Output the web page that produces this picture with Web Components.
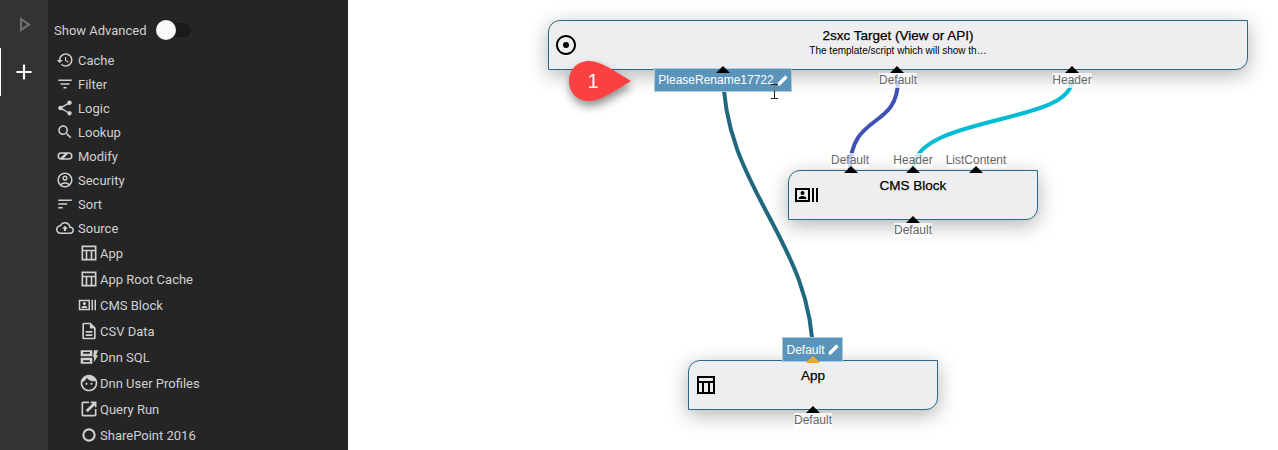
<!DOCTYPE html>
<html>
<head>
<meta charset="utf-8">
<title>Query designer</title>
<style>
  html, body { margin: 0; height: 450px; overflow: hidden; background: #fff; }
  body { display: flex; font-family: "Liberation Sans", Arial, sans-serif; }
</style>
</head>
<body>
<vd-rail></vd-rail>
<vd-palette>
  <vd-group icon="history">Cache</vd-group>
  <vd-group icon="filter">Filter</vd-group>
  <vd-group icon="share">Logic</vd-group>
  <vd-group icon="search">Lookup</vd-group>
  <vd-group icon="modify">Modify</vd-group>
  <vd-group icon="account">Security</vd-group>
  <vd-group icon="sort">Sort</vd-group>
  <vd-group icon="cloud">Source</vd-group>
  <vd-source icon="table">App</vd-source>
  <vd-source icon="table">App Root Cache</vd-source>
  <vd-source icon="cms" wide>CMS Block</vd-source>
  <vd-source icon="file">CSV Data</vd-source>
  <vd-source icon="sql">Dnn SQL</vd-source>
  <vd-source icon="face">Dnn User Profiles</vd-source>
  <vd-source icon="launch">Query Run</vd-source>
  <vd-source icon="circle">SharePoint 2016</vd-source>
</vd-palette>
<vd-canvas>
  <vd-node style="left:200px;top:20px;width:700px" icon="radio" name="2sxc Target (View or API)" note="The template/script which will show th…"></vd-node>
  <vd-node style="left:440px;top:170px;width:250px" icon="cms" name="CMS Block"></vd-node>
  <vd-node style="left:340px;top:360px;width:250px" icon="table" name="App"></vd-node>

  <svg class="wires" width="930" height="450">
    <path d="M375 70C375 190 465 240 465 358" stroke="#20687f"/>
    <path d="M550 80C550 130 502 112 502 170" stroke="#3f51b5"/>
    <path d="M724 80C724 125 565 115 565 170" stroke="#00bcd4"/>
  </svg>

  <vd-label style="left:550px;top:73px">Default</vd-label>
  <vd-label style="left:724px;top:73px">Header</vd-label>
  <vd-label style="left:502px;top:153px">Default</vd-label>
  <vd-label style="left:565px;top:153px">Header</vd-label>
  <vd-label style="left:628px;top:153px">ListContent</vd-label>
  <vd-label style="left:565px;top:223px">Default</vd-label>
  <vd-label style="left:465px;top:413px">Default</vd-label>

  <vd-tag style="left:306px;top:68px;width:138px">PleaseRename17722</vd-tag>
  <vd-tag style="left:434px;top:337px;width:61px;height:25px" warn>Default</vd-tag>

  <vd-port style="left:375px;top:66px"></vd-port>
  <vd-port style="left:549px;top:66px"></vd-port>
  <vd-port style="left:724px;top:66px"></vd-port>
  <vd-port style="left:503px;top:166px"></vd-port>
  <vd-port style="left:565px;top:166px"></vd-port>
  <vd-port style="left:628px;top:166px"></vd-port>
  <vd-port style="left:565px;top:216px"></vd-port>
  <vd-port style="left:465px;top:406px"></vd-port>

  <vd-callout style="left:221px;top:61px">1</vd-callout>
  <svg class="cursor" width="9" height="15" viewBox="0 0 9 15"><path d="M1 .5h7M1 14.500h7M4.500 .5v14" fill="none" stroke="#222"/><path d="M4.500 1v6" stroke="#a8643a"/></svg>
</vd-canvas>

<script>
const ICONS = {
  play: '<path d="M8 5v15l11-7.500z M10 9l5 3.500-5 3.500z" fill-rule="evenodd"/>',
  history: '<path d="M13 3c-4.970 0-9 4.030-9 9H1l3.890 3.890.07.14L9 12H6c0-3.870 3.130-7 7-7s7 3.130 7 7-3.130 7-7 7c-1.930 0-3.680-.79-4.940-2.060l-1.420 1.420C8.270 19.990 10.510 21 13 21c4.970 0 9-4.030 9-9s-4.030-9-9-9zm-1 5v5l4.280 2.540.72-1.210-3.500-2.080V8H12z"/>',
  filter: '<path d="M10 18h4v-2h-4v2zM3 6v2h18V6H3zm3 7h12v-2H6v2z"/>',
  share: '<path d="M18 16.080c-.76 0-1.440.3-1.960.77L8.910 12.700c.05-.23.09-.46.09-.7s-.04-.47-.09-.7l7.050-4.110c.54.5 1.250.81 2.040.81 1.660 0 3-1.340 3-3s-1.340-3-3-3-3 1.340-3 3c0 .24.04.47.09.7L8.040 9.810C7.500 9.310 6.790 9 6 9c-1.660 0-3 1.340-3 3s1.340 3 3 3c.79 0 1.500-.31 2.040-.81l7.120 4.160c-.05.21-.08.43-.08.65 0 1.610 1.310 2.920 2.920 2.920 1.610 0 2.920-1.310 2.920-2.920s-1.310-2.920-2.920-2.920z"/>',
  search: '<path d="M15.500 14h-.79l-.28-.27C15.410 12.590 16 11.110 16 9.500 16 5.910 13.090 3 9.500 3S3 5.910 3 9.500 5.910 16 9.500 16c1.610 0 3.090-.59 4.230-1.570l.27.28v.79l5 4.990L20.490 19l-4.990-5zm-6 0C7.010 14 5 11.990 5 9.500S7.010 5 9.500 5 14 7.010 14 9.500 11.990 14 9.500 14z"/>',
  modify: '<path d="M7 7h10a5 5 0 0 1 0 10H7A5 5 0 0 1 7 7zm0 2a3 3 0 0 0-1.200 5.750L11.500 9zm3.300 6H17a3 3 0 0 0 0-6h-1z" fill-rule="evenodd"/>',
  account: '<path d="M12 2C6.480 2 2 6.480 2 12s4.480 10 10 10 10-4.480 10-10S17.520 2 12 2zM7.350 18.500C8.660 17.560 10.260 17 12 17s3.340.56 4.650 1.500c-1.310.94-2.910 1.500-4.650 1.500s-3.340-.56-4.650-1.500zm10.790-1.380C16.450 15.800 14.320 15 12 15s-4.450.8-6.140 2.120C4.700 15.730 4 13.950 4 12c0-4.420 3.580-8 8-8s8 3.580 8 8c0 1.950-.7 3.730-1.860 5.120z"/><path d="M12 6c-1.930 0-3.500 1.570-3.500 3.500S10.070 13 12 13s3.500-1.570 3.500-3.500S13.930 6 12 6zm0 5c-.83 0-1.500-.67-1.500-1.500S11.170 8 12 8s1.500.67 1.500 1.500S12.830 11 12 11z"/>',
  sort: '<path d="M3 18h6v-2H3v2zM3 6v2h18V6H3zm0 7h12v-2H3v2z"/>',
  cloud: '<path d="M19.350 10.040C18.670 6.590 15.640 4 12 4 9.110 4 6.600 5.640 5.350 8.040 2.340 8.360 0 10.910 0 14c0 3.310 2.690 6 6 6h13c2.760 0 5-2.240 5-5 0-2.640-2.050-4.780-4.650-4.960zM19 18H6c-2.210 0-4-1.790-4-4 0-2.050 1.530-3.760 3.560-3.970l1.070-.11.5-.95C8.080 7.140 9.940 6 12 6c2.620 0 4.880 1.860 5.390 4.430l.3 1.500 1.530.11c1.560.1 2.780 1.410 2.780 2.960 0 1.650-1.350 3-3 3zM8 13h2.550v3h2.900v-3H16l-4-4z"/>',
  table: '<path d="M3 3h18v18H3zm2 2v3h14V5zm0 5v9h3v-9zm5 0v9h4v-9zm6 0v9h3v-9z" fill-rule="evenodd"/>',
  cms: '<path d="M1 5h15v14H1zm2 2v10h11V7z" fill-rule="evenodd"/><circle cx="8.500" cy="10" r="2"/><path d="M4.500 16c0-2 2-3 4-3s4 1 4 3zM18 5h2v14h-2zM22 5h2v14h-2z"/>',
  file: '<path d="M8 16h8v2H8zm0-4h8v2H8zm6-10H6c-1.100 0-2 .9-2 2v16c0 1.100.89 2 1.990 2H18c1.100 0 2-.9 2-2V8l-6-6zm4 18H6V4h7v5h5v11z"/>',
  sql: '<path d="M2 4h14v7H2zm3 2v2h8V6zM2 13h14v7H2zm3 3v2h8v-2zM18 4h5l-2.500 6H23l-5 8v-6h-1z" fill-rule="evenodd"/>',
  face: '<path d="M9 11.750c-.69 0-1.250.56-1.250 1.250s.56 1.250 1.250 1.250 1.250-.56 1.250-1.250-.56-1.250-1.250-1.250zm6 0c-.69 0-1.250.56-1.250 1.250s.56 1.250 1.250 1.250 1.250-.56 1.250-1.250-.56-1.250-1.250-1.250zM12 2C6.480 2 2 6.480 2 12s4.480 10 10 10 10-4.480 10-10S17.520 2 12 2zm0 18c-4.410 0-8-3.590-8-8 0-.29.02-.58.05-.86 2.360-1.050 4.230-2.980 5.210-5.370C11.070 8.330 14.050 10 17.420 10c.78 0 1.530-.09 2.250-.26.21.71.33 1.470.33 2.260 0 4.410-3.590 8-8 8z"/>',
  launch: '<path d="M19 19H5V5h7V3H5c-1.110 0-2 .9-2 2v14c0 1.100.89 2 2 2h14c1.100 0 2-.9 2-2v-7h-2v7z"/><path d="M14 3v2h2.600L8 13.600 10.400 16 19 7.400V10h2V3z"/>',
  circle: '<path d="M12 4a8 8 0 1 0 0 16 8 8 0 0 0 0-16zm0 2.500a5.500 5.500 0 1 1 0 11 5.500 5.500 0 0 1 0-11z" fill-rule="evenodd"/>',
  radio: '<circle cx="12" cy="12" r="3"/><path d="M12 2C6.480 2 2 6.480 2 12s4.480 10 10 10 10-4.480 10-10S17.520 2 12 2zm0 18c-4.420 0-8-3.580-8-8s3.580-8 8-8 8 3.580 8 8-3.580 8-8 8z"/>',
  edit: '<path d="M3 21v-4.500L16.200 3.300c.5-.5 1.300-.5 1.800 0l2.700 2.700c.5.5.5 1.300 0 1.800L7.500 21z"/>',
};

function svg(name, size) {
  return `<svg width="${size}" height="${size}" viewBox="0 0 24 24" fill="currentColor">${ICONS[name]}</svg>`;
}

// all elements just render one string into an open shadow root
class Base extends HTMLElement {
  connectedCallback() {
    if (this.shadowRoot) return;
    this.attachShadow({ mode: 'open' }).innerHTML = this.markup();
  }
}

class VdRail extends Base {
  markup() {
    return `<style>
      :host { display: flex; flex-direction: column; flex: none; width: 48px; height: 450px; background: #333; }
      div { height: 48px; display: flex; align-items: center; justify-content: center; }
      .play { color: #6e6e6e; }
      .add { color: #fff; border-left: 1px solid #fff; margin-right: 1px; }
    </style>
    <div class="play">${svg('play', 24)}</div>
    <div class="add"><svg width="26" height="26" viewBox="0 0 24 24" fill="currentColor"><path d="M19 13h-6v6h-2v-6H5v-2h6V5h2v6h6z"/></svg></div>`;
  }
}

class VdPalette extends Base {
  markup() {
    return `<style>
      :host { display: block; flex: none; width: 300px; height: 450px; box-sizing: border-box; padding: 18px 0 0 6px;
              background: #252526; color: #d0d0d0; font: 13px Roboto, sans-serif; overflow: hidden; }
      .adv { display: flex; align-items: center; height: 24px; margin-bottom: 6px; }
      .track { position: relative; width: 30px; height: 14px; margin-left: 14px; border-radius: 7px; background: #1a1a1a; }
      .knob { position: absolute; left: -5px; top: -3px; width: 20px; height: 20px; border-radius: 50%; background: #fafafa; }
    </style>
    <div class="adv">Show Advanced<span class="track"><span class="knob"></span></span></div>
    <slot></slot>`;
  }
}

class VdGroup extends Base {
  markup() {
    return `<style>
      :host { display: flex; align-items: center; height: 24px; padding-left: 2px; }
      svg { margin-right: 4px; }
    </style>${svg(this.getAttribute('icon'), 18)}<slot></slot>`;
  }
}

class VdSource extends Base {
  markup() {
    const wide = this.hasAttribute('wide');
    return `<style>
      :host { display: flex; align-items: center; height: 26px; padding-left: 24px; }
      i { display: flex; justify-content: ${wide ? 'flex-start' : 'center'}; width: 22px; }
    </style><i>${svg(this.getAttribute('icon'), wide ? 18 : 20)}</i><slot></slot>`;
  }
}

class VdCanvas extends Base {
  markup() {
    return `<style>
      :host { display: block; position: relative; flex: 1; height: 450px; overflow: hidden; }
      ::slotted(svg.wires) { position: absolute; left: 0; top: 0; fill: none; stroke-width: 4px; }
      ::slotted(svg.cursor) { position: absolute; left: 422px; top: 84px; }
    </style><slot></slot>`;
  }
}

class VdNode extends Base {
  markup() {
    const note = this.getAttribute('note');
    return `<style>
      :host { position: absolute; box-sizing: border-box; height: 50px; background: #eeeef0; color: #000;
              border: 1px solid #2a6888; border-radius: 12px 0 12px 0;
              box-shadow: 0 5px 20px rgba(0,0,0,.3); text-align: center; }
      .name { margin-top: 7px; font-size: 13.500px; line-height: 16px; -webkit-text-stroke: .25px #000; }
      .note { font-size: 10px; line-height: 14px; }
      svg { position: absolute; left: 5px; top: 12px; }
    </style>
    ${svg(this.getAttribute('icon'), 24)}
    <div class="name">${this.getAttribute('name')}</div>
    ${note ? `<div class="note">${note}</div>` : ''}`;
  }
}

class VdPort extends Base {
  markup() {
    return `<style>
      :host { position: absolute; width: 0; height: 0; margin-left: -7px;
              border: 7px solid transparent; border-top: 0; border-bottom: 7px solid #000; }
    </style>`;
  }
}

class VdLabel extends Base {
  markup() {
    return `<style>
      :host { position: absolute; transform: translateX(-50%); color: #666; font-size: 12px; line-height: 15px;
              background: rgba(255,255,255,.75); white-space: nowrap; }
    </style><slot></slot>`;
  }
}

class VdTag extends Base {
  markup() {
    const warn = this.hasAttribute('warn');
    return `<style>
      :host { position: absolute; box-sizing: border-box; display: flex; align-items: center; justify-content: center; gap: 2px;
              height: 24px; padding-left: 1px; background: #5a94bb; border: 1px solid #a9c9de; color: #fff; font-size: 12px; white-space: nowrap; }
      .in { position: absolute; left: 50%; top: 18px; margin-left: -7px; width: 0; height: 0;
            border: 7px solid transparent; border-top: 0; border-bottom: 7px solid #f5a623; }
    </style><slot></slot>${svg('edit', 13)}${warn ? '<span class="in"></span>' : ''}`;
  }
}

class VdCallout extends Base {
  markup() {
    return `<style>
      :host { position: absolute; width: 62px; height: 40px; color: #fff; font-size: 20px; line-height: 40px;
              filter: drop-shadow(1px 5px 5px rgba(0,0,0,.45)); }
      svg { position: absolute; inset: 0; }
      span { position: absolute; left: 0; width: 48px; top: 0; text-align: center; }
    </style>
    <svg width="62" height="40" viewBox="0 0 62 40"><path d="M20 0C33 0 48 12 62 20 48 28 33 40 20 40 8 40 0 31 0 20S8 0 20 0z" fill="#fa4040"/></svg>
    <span><slot></slot></span>`;
  }
}

customElements.define('vd-rail', VdRail);
customElements.define('vd-palette', VdPalette);
customElements.define('vd-group', VdGroup);
customElements.define('vd-source', VdSource);
customElements.define('vd-canvas', VdCanvas);
customElements.define('vd-node', VdNode);
customElements.define('vd-port', VdPort);
customElements.define('vd-label', VdLabel);
customElements.define('vd-tag', VdTag);
customElements.define('vd-callout', VdCallout);
</script>
</body>
</html>
